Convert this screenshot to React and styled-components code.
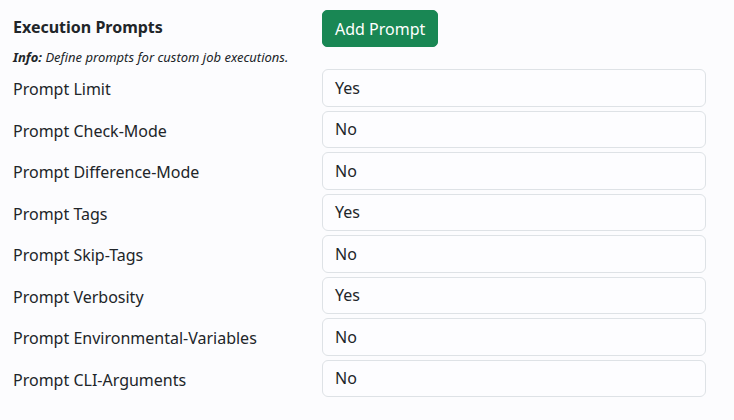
import React from "react";
import styled, { createGlobalStyle } from "styled-components";

const Global = createGlobalStyle`
  html, body { margin: 0; padding: 0; background: #fcfcfe; }
  body { font-family: "Noto Sans", "Open Sans", sans-serif; color: #212529; }
`;

const Page = styled.div`
  padding: 10px 28px 0 13px;
  display: grid;
  grid-template-columns: 309px 384px;
`;

const Header = styled.div`
  display: flex;
  flex-direction: column;
`;

const Title = styled.div`
  font-weight: 700;
  font-size: 16px;
  line-height: 20px;
  margin-top: 7px;
`;

const Info = styled.div`
  font-size: 13px;
  font-style: italic;
  line-height: 18px;
  margin-top: 11px;
  b { font-weight: 700; }
`;

const ButtonCell = styled.div`
  padding-bottom: 22px;
`;

const Button = styled.button`
  font-family: inherit;
  font-size: 16px;
  line-height: 22px;
  color: #fff;
  background: #198754;
  border: 1px solid #198754;
  border-radius: 5px;
  padding: 7px 12px;
  height: 37px;
  cursor: pointer;
`;

const Label = styled.div`
  font-size: 16px;
  display: flex;
  align-items: center;
  height: 37.5px;
  padding-top: 3px;
  box-sizing: border-box;
  margin-bottom: 4px;
`;

const Field = styled.div`
  box-sizing: border-box;
  height: 37.5px;
  margin-bottom: 4px;
  border: 1px solid #dee2e6;
  border-radius: 6px;
  background: #fdfdff;
  font-size: 16px;
  padding: 0 12px;
  display: flex;
  align-items: center;
`;

const rows = [
  ["Prompt Limit", "Yes"],
  ["Prompt Check-Mode", "No"],
  ["Prompt Difference-Mode", "No"],
  ["Prompt Tags", "Yes"],
  ["Prompt Skip-Tags", "No"],
  ["Prompt Verbosity", "Yes"],
  ["Prompt Environmental-Variables", "No"],
  ["Prompt CLI-Arguments", "No"],
];

export default function App() {
  return (
    <>
      <Global />
      <Page>
        <Header>
          <Title>Execution Prompts</Title>
          <Info>
            <b>Info:</b> Define prompts for custom job executions.
          </Info>
        </Header>
        <ButtonCell>
          <Button>Add Prompt</Button>
        </ButtonCell>
        {rows.map(([l, v]) => (
          <React.Fragment key={l}>
            <Label>{l}</Label>
            <Field>{v}</Field>
          </React.Fragment>
        ))}
      </Page>
    </>
  );
}
